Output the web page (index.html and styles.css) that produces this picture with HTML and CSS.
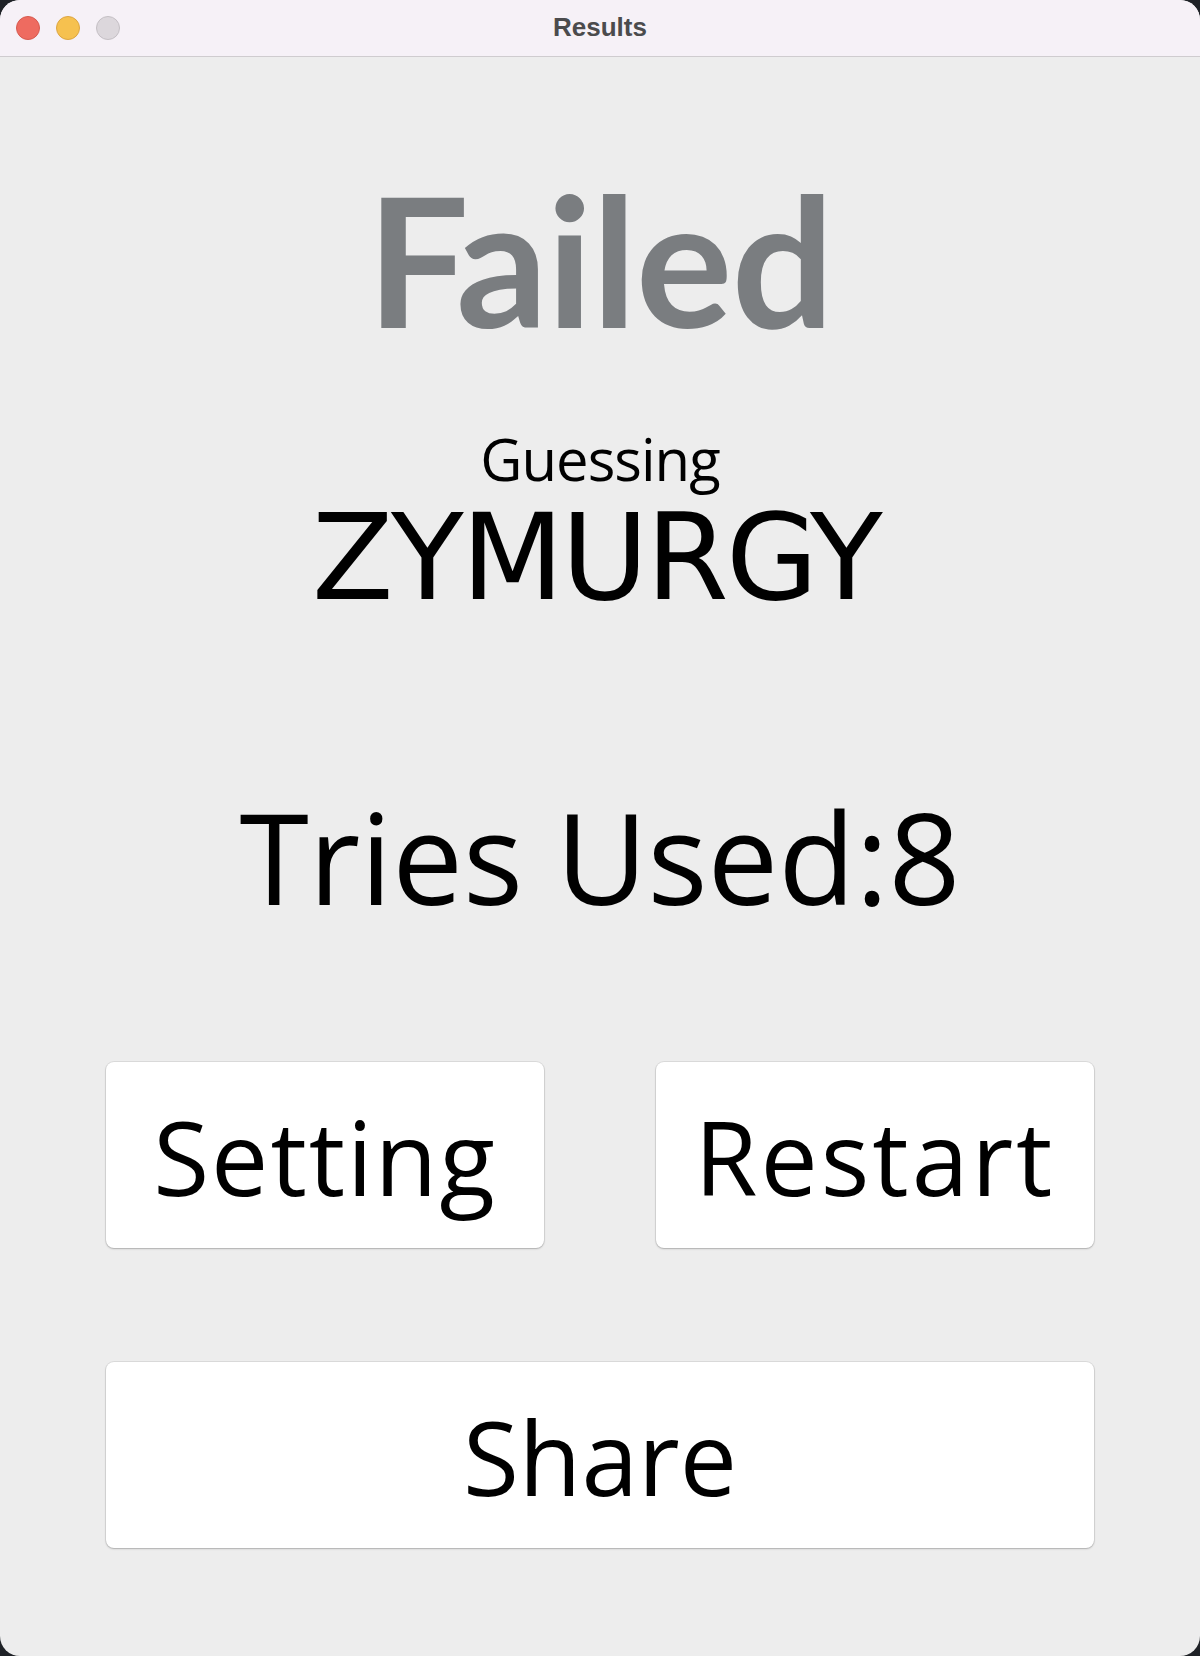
FILE: index.html
```html
<!DOCTYPE html>
<html lang="en">
<head>
<meta charset="utf-8">
<title>Results</title>
<link rel="stylesheet" href="styles.css">
</head>
<body>
<div class="window">
  <div class="titlebar">
    <div class="lights">
      <span class="light red"></span>
      <span class="light yellow"></span>
      <span class="light gray"></span>
    </div>
    <div class="title">Results</div>
    <div></div>
  </div>
  <main class="content">
    <h1 class="failed">Failed</h1>
    <div class="guessing">Guessing</div>
    <div class="word">ZYMURGY</div>
    <div class="tries">Tries Used:8</div>
    <div class="btn-row">
      <button class="btn btn-setting">Setting</button>
      <button class="btn btn-restart">Restart</button>
    </div>
    <button class="btn btn-wide">Share</button>
  </main>
</div>
</body>
</html>
```
FILE: styles.css
```css
html, body {
  margin: 0;
  padding: 0;
  background: #1f2227;
}
.window {
  width: 1200px;
  height: 1656px;
  border-radius: 20px;
  overflow: hidden;
  background: #ededed;
  display: flex;
  flex-direction: column;
}
.titlebar {
  height: 57px;
  box-sizing: border-box;
  background: #f6f1f7;
  border-bottom: 1px solid #cfcccf;
  display: grid;
  grid-template-columns: 1fr auto 1fr;
  align-items: center;
}
.lights {
  display: flex;
  gap: 16px;
  padding-left: 16px;
  padding-bottom: 1px;
}
.light {
  width: 24px;
  height: 24px;
  border-radius: 50%;
  box-sizing: border-box;
}
.red { background: #ee6b60; border: 1px solid #d65a4f; }
.yellow { background: #f6c14f; border: 1px solid #dca542; }
.gray { background: #dcd7dc; border: 1px solid #c4bfc4; }
.title {
  font-family: "Liberation Sans", Arial, sans-serif;
  font-weight: bold;
  font-size: 26px;
  color: #4b4b4d;
  padding-bottom: 2px;
}
.content {
  display: flex;
  flex-direction: column;
  align-items: center;
  padding: 0 106px;
}
.failed {
  margin: 110px 0 0;
  font-family: "Comic Sans MS", "Lato", sans-serif;
  font-weight: bold;
  font-size: 181px;
  line-height: 182px;
  height: 182px;
  color: #7a7d80;
  letter-spacing: -1px;
}
.guessing {
  margin-top: 81px;
  font-family: "Comic Sans MS", "Open Sans", sans-serif;
  font-size: 58px;
  line-height: 58px;
  height: 58px;
  color: #000;
  letter-spacing: -1px;
}
.word {
  margin-top: 11px;
  font-family: "DejaVu Sans", Verdana, sans-serif;
  font-size: 119px;
  line-height: 119px;
  height: 119px;
  color: #000;
  letter-spacing: -2.5px;
  padding-right: 8px;
}
.tries {
  margin-top: 175px;
  font-family: "Comic Sans MS", "Open Sans", sans-serif;
  font-size: 126px;
  line-height: 126px;
  height: 126px;
  color: #000;
  letter-spacing: 0;
}
.btn-row {
  margin-top: 143px;
  width: 100%;
  display: grid;
  grid-template-columns: 438px 438px;
  justify-content: space-between;
}
.btn {
  height: 186px;
  background: #ffffff;
  border: none;
  border-radius: 8px;
  box-shadow: 0 0 0 1px rgba(0,0,0,0.07), 0 1px 2px rgba(0,0,0,0.22);
  font-family: "Comic Sans MS", "Open Sans", sans-serif;
  font-size: 102px;
  line-height: 102px;
  color: #000;
  padding: 4px 0 0;
  display: flex;
  align-items: center;
  justify-content: center;
}
.btn-setting { letter-spacing: 2px; }
.btn-restart { letter-spacing: 3px; }
.btn-wide {
  margin-top: 114px;
  width: 100%;
}
```
